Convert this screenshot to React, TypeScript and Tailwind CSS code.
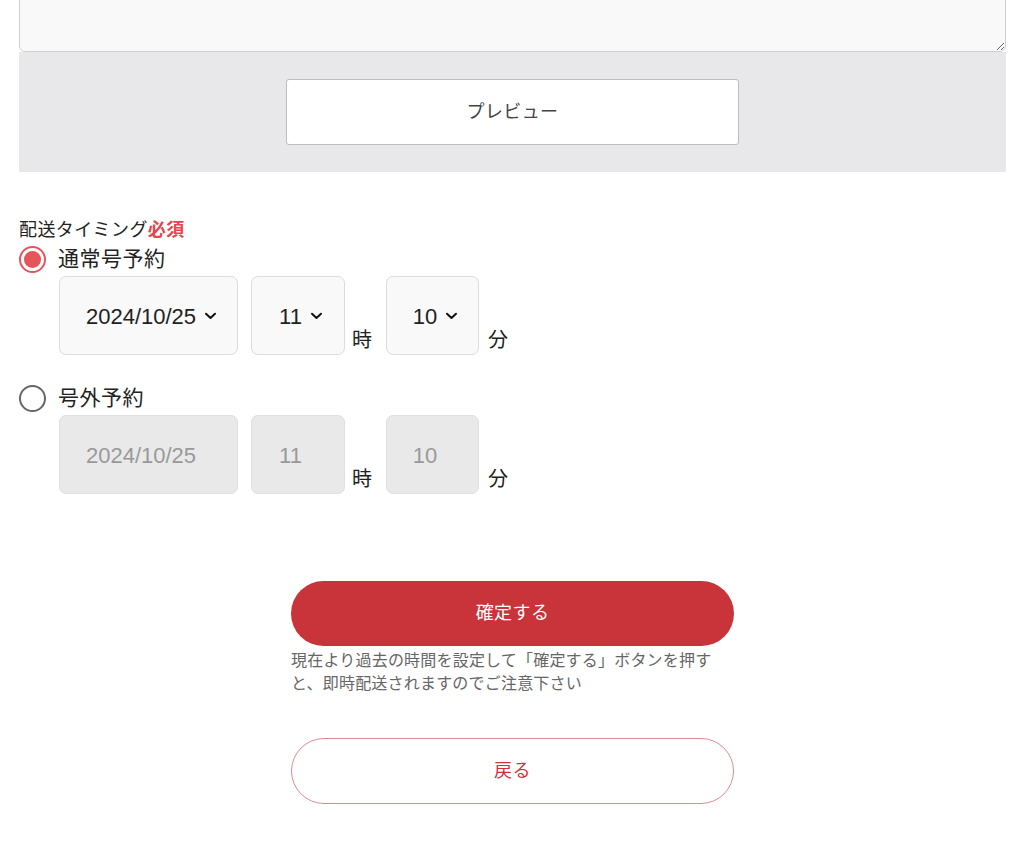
import React from 'react';

const jp = { fontFamily: '"Liberation Sans", "Noto Sans CJK JP", sans-serif' };

const Chevron = ({ hidden }: { hidden?: boolean }) => (
	<svg width="13" height="8" viewBox="0 0 13 8" className={`ml-[8px] ${hidden ? 'invisible' : ''}`}>
		<path d="M2 1.8 L6.5 6 L11 1.8" fill="none" stroke="#111" strokeWidth="2" strokeLinecap="round" strokeLinejoin="round" />
	</svg>
);

const Box = ({ w, value, disabled }: { w: string; value: string; disabled?: boolean }) => (
	<div
		className={`${w} h-[79px] flex items-center justify-center pl-[6px] pt-[1px] rounded-[7px] border text-[22px] ${
			disabled ? 'bg-[#e9e9e9] border-[#e0e0e0] text-[#999]' : 'bg-[#f9f9f9] border-[#dcdcdc] text-[#222]'
		}`}
	>
		<span>{value}</span>
		<Chevron hidden={disabled} />
	</div>
);

const TimeRow = ({ disabled }: { disabled?: boolean }) => (
	<div className="flex items-end pl-[40px]">
		<Box w="w-[179px]" value="2024/10/25" disabled={disabled} />
		<div className="ml-[13px]">
			<Box w="w-[94px]" value="11" disabled={disabled} />
		</div>
		<span className="ml-[7px] mb-[3px] text-[20px] leading-[24px] text-[#222]">時</span>
		<div className="ml-[14px]">
			<Box w="w-[93px]" value="10" disabled={disabled} />
		</div>
		<span className="ml-[9px] mb-[3px] text-[20px] leading-[24px] text-[#222]">分</span>
	</div>
);

const Radio = ({ checked, label }: { checked?: boolean; label: string }) => (
	<div className="flex items-center h-[28px]">
		<div
			className={`w-[27px] h-[27px] rounded-full border-2 flex items-center justify-center ${
				checked ? 'border-[#e4555c]' : 'border-[#666]'
			}`}
		>
			{checked && <div className="w-[17px] h-[17px] rounded-full bg-[#e4555c]" />}
		</div>
		<span className="ml-[12px] text-[21px] tracking-[0.5px] text-[#222]">{label}</span>
	</div>
);

export default function App() {
	return (
		<div className="min-h-screen bg-white overflow-hidden" style={jp}>
			<div className="ml-[19px] w-[987px]">
				<textarea
					className="block w-full h-[112px] -mt-[60px] bg-[#f9f9f9] border border-[#cfcfcf] rounded-[6px] outline-none"
					defaultValue=""
				/>
				<div className="h-[120px] bg-[#e8e8ea] flex justify-center pt-[27px]">
					<button className="w-[453px] h-[66px] bg-white border border-[#bdbdbd] rounded-[3px] text-[18px] tracking-[0.4px] text-[#444]">
						プレビュー
					</button>
				</div>

				<div className="mt-[48px] text-[18px] leading-[20px] tracking-[0.4px] text-[#222]">
					配送タイミング<span className="text-[#e4464f] font-bold">必須</span>
				</div>

				<div className="mt-[5px]">
					<Radio checked label="通常号予約" />
				</div>
				<div className="mt-[3px]">
					<TimeRow />
				</div>

				<div className="mt-[29px]">
					<Radio label="号外予約" />
				</div>
				<div className="mt-[3px]">
					<TimeRow disabled />
				</div>

				<div className="mt-[87px] flex flex-col items-center">
					<div className="w-[443px]">
						<button className="w-full h-[65px] rounded-full bg-[#c9333a] text-white text-[18px] tracking-[0.4px]">
							確定する
						</button>
						<p className="mt-[3px] text-[16px] leading-[23px] tracking-[0.2px] text-[#666] whitespace-nowrap">
							現在より過去の時間を設定して「確定する」ボタンを押す
							<br />
							と、即時配送されますのでご注意下さい
						</p>
						<button className="mt-[43px] w-full h-[66px] rounded-full bg-white border border-[#e08a8e] text-[#c9333a] text-[18px] tracking-[0.4px]">
							戻る
						</button>
					</div>
				</div>
			</div>
		</div>
	);
}
